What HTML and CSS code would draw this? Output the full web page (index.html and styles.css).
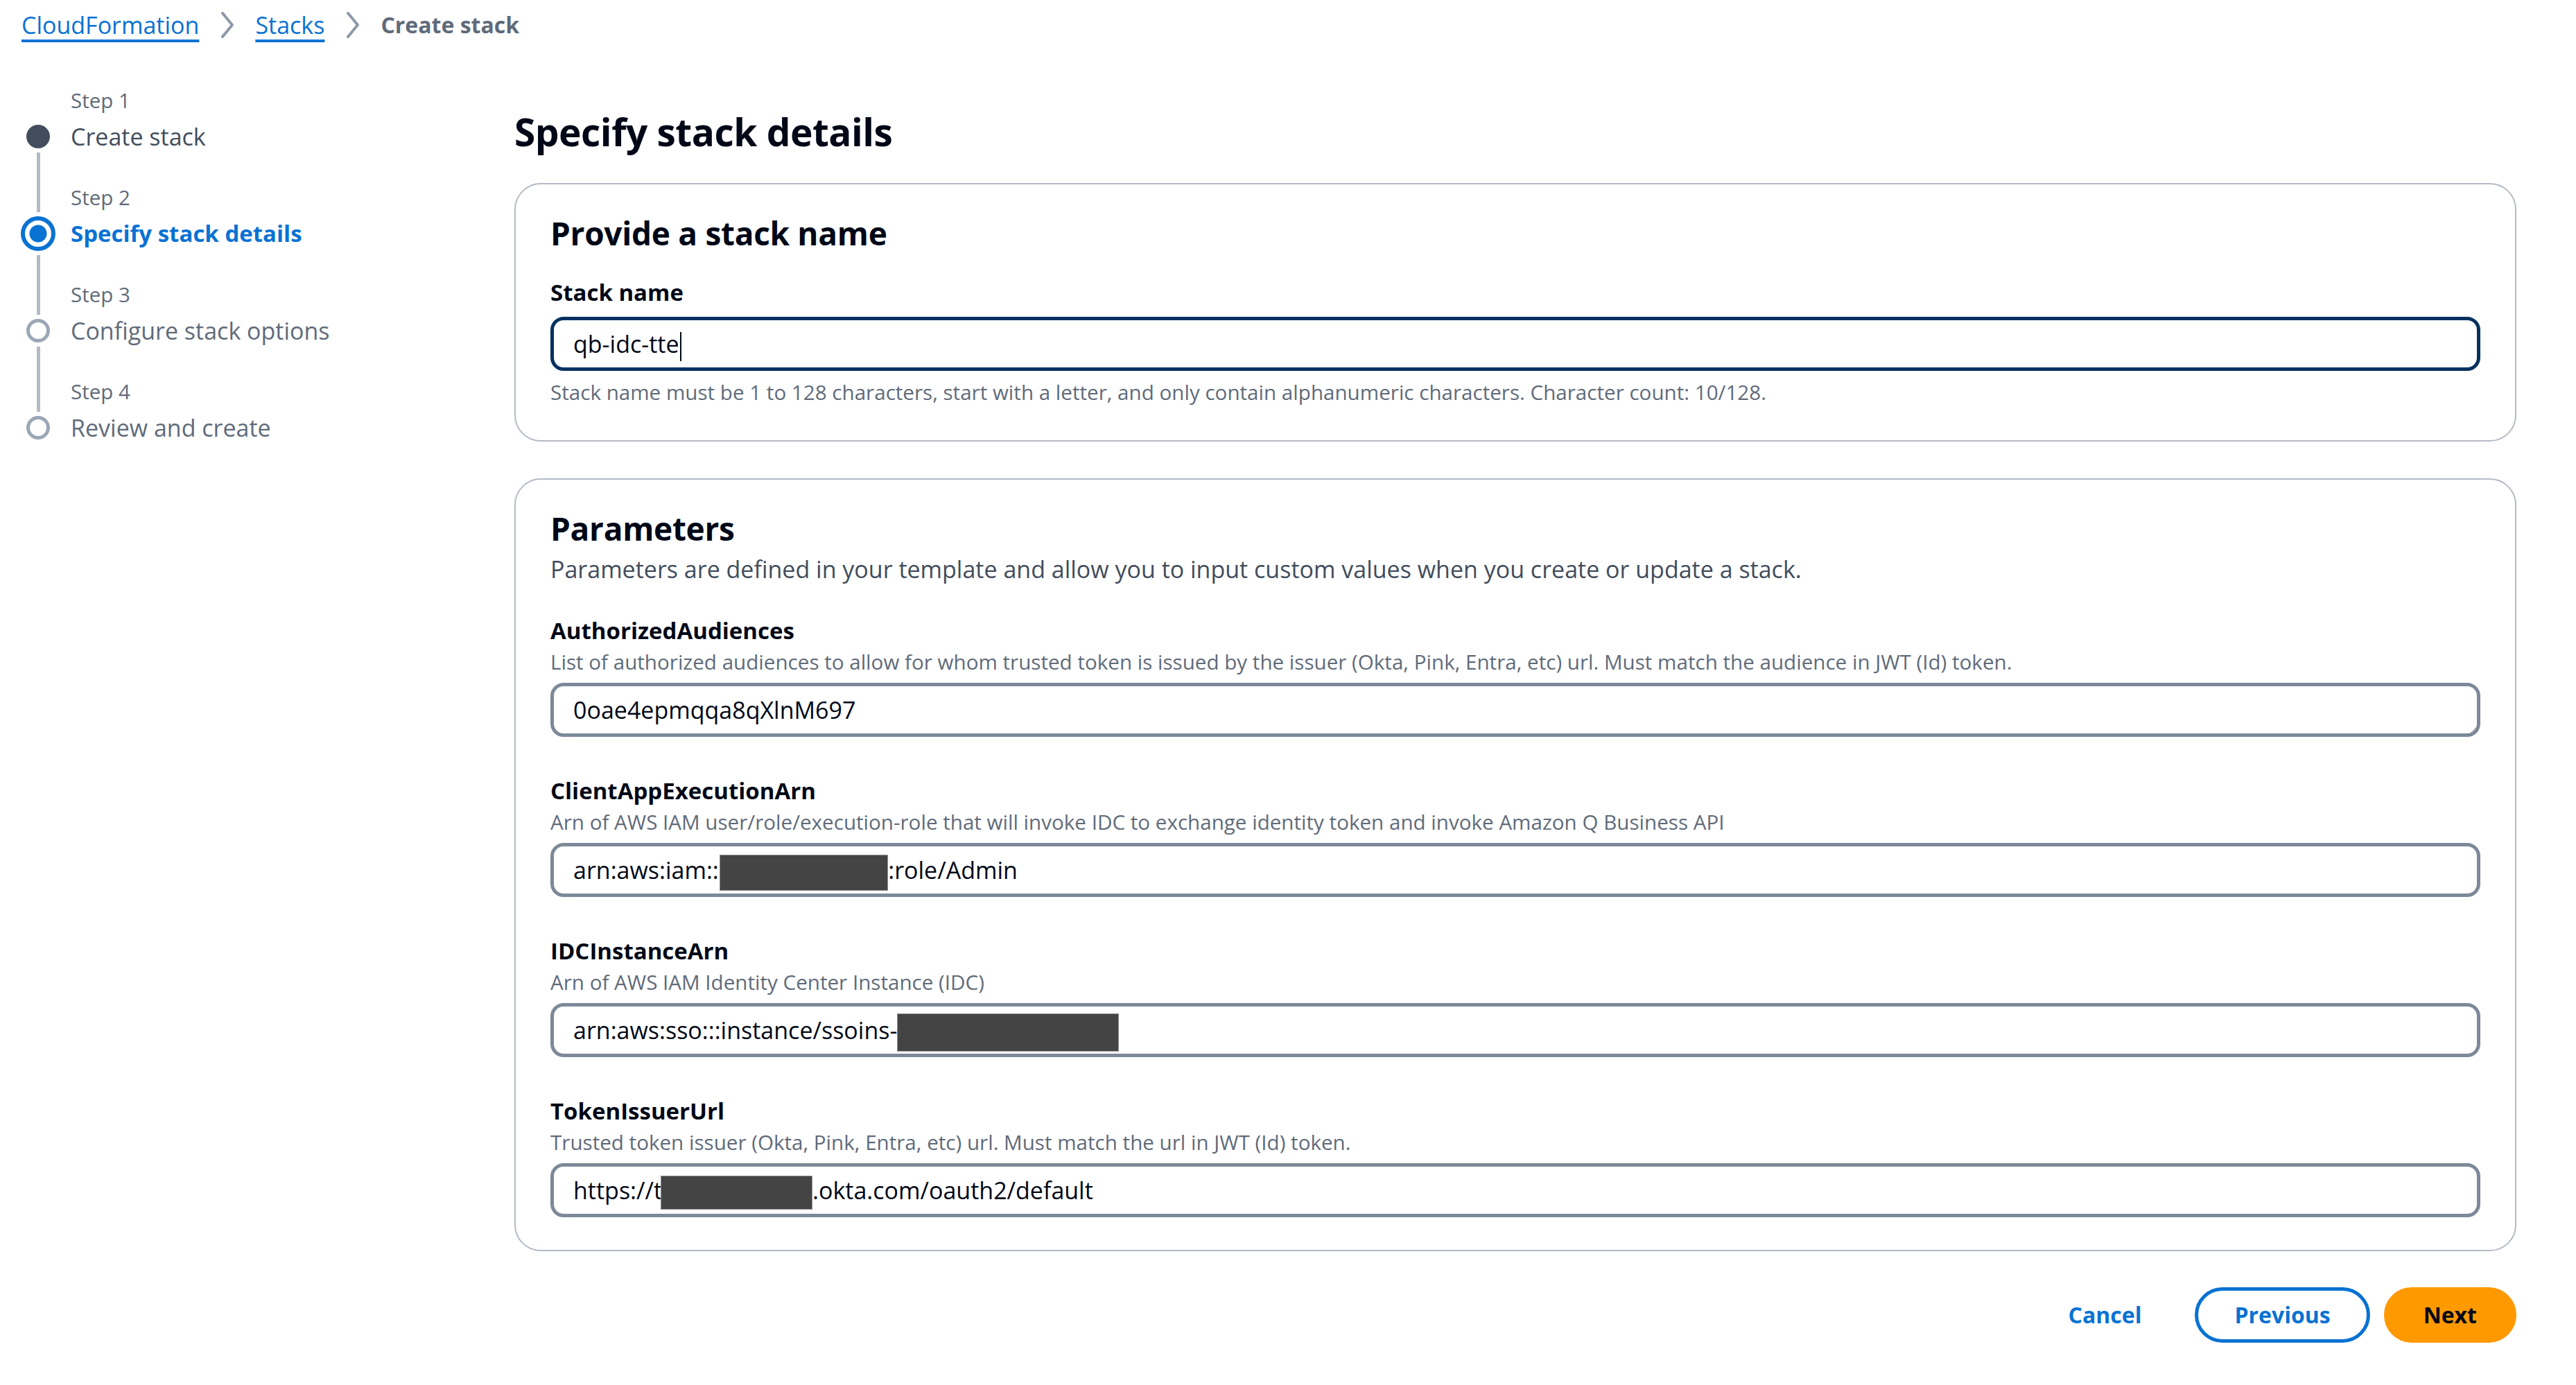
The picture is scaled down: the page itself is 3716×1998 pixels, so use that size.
FILE: index.html
```html
<!DOCTYPE html>
<html lang="en">
<head>
<meta charset="utf-8">
<title>Create stack</title>
<link rel="stylesheet" href="styles.css">
</head>
<body>
<nav class="breadcrumbs">
  <a class="crumb-link" href="#">CloudFormation</a>
  <svg class="crumb-sep" width="24" height="40" viewBox="0 0 24 40" aria-hidden="true"><polyline points="5,3 19,20 5,37" fill="none" stroke="#8d99a8" stroke-width="4" stroke-linejoin="round" stroke-linecap="round"/></svg>
  <a class="crumb-link" href="#">Stacks</a>
  <svg class="crumb-sep" width="24" height="40" viewBox="0 0 24 40" aria-hidden="true"><polyline points="5,3 19,20 5,37" fill="none" stroke="#8d99a8" stroke-width="4" stroke-linejoin="round" stroke-linecap="round"/></svg>
  <span class="crumb-current">Create stack</span>
</nav>

<div class="layout">
  <ol class="steps">
    <li class="step step-first">
      <div class="rail"><span class="seg seg-top"></span><span class="dot dot-done"></span><span class="seg seg-bottom"></span></div>
      <span class="step-num">Step 1</span>
      <span class="step-title title-done">Create stack</span>
    </li>
    <li class="step">
      <div class="rail"><span class="seg seg-top seg-top-active"></span><span class="dot dot-active"></span><span class="seg seg-bottom"></span></div>
      <span class="step-num">Step 2</span>
      <span class="step-title title-active">Specify stack details</span>
    </li>
    <li class="step">
      <div class="rail"><span class="seg seg-top"></span><span class="dot dot-todo"></span><span class="seg seg-bottom"></span></div>
      <span class="step-num">Step 3</span>
      <span class="step-title title-todo">Configure stack options</span>
    </li>
    <li class="step step-last">
      <div class="rail"><span class="seg seg-top"></span><span class="dot dot-todo"></span><span class="seg seg-bottom"></span></div>
      <span class="step-num">Step 4</span>
      <span class="step-title title-todo">Review and create</span>
    </li>
  </ol>

  <main class="main">
    <h1 class="page-title">Specify stack details</h1>

    <section class="card card-name">
      <h2 class="card-title">Provide a stack name</h2>
      <div class="field field-first">
        <label class="field-label">Stack name</label>
        <div class="text-input text-input-focused">qb-idc-tte<span class="caret"></span></div>
        <p class="field-hint">Stack name must be 1 to 128 characters, start with a letter, and only contain alphanumeric characters. Character count: 10/128.</p>
      </div>
    </section>

    <section class="card card-params">
      <h2 class="card-title">Parameters</h2>
      <p class="card-desc">Parameters are defined in your template and allow you to input custom values when you create or update a stack.</p>

      <div class="field field-first">
        <label class="field-label">AuthorizedAudiences</label>
        <p class="field-desc">List of authorized audiences to allow for whom trusted token is issued by the issuer (Okta, Pink, Entra, etc) url. Must match the audience in JWT (Id) token.</p>
        <textarea class="text-area" rows="1">0oae4epmqqa8qXlnM697</textarea>
      </div>

      <div class="field">
        <label class="field-label">ClientAppExecutionArn</label>
        <p class="field-desc">Arn of AWS IAM user/role/execution-role that will invoke IDC to exchange identity token and invoke Amazon Q Business API</p>
        <div class="text-input">arn:aws:iam::7<span class="redact redact-account"></span>:role/Admin</div>
      </div>

      <div class="field">
        <label class="field-label">IDCInstanceArn</label>
        <p class="field-desc">Arn of AWS IAM Identity Center Instance (IDC)</p>
        <div class="text-input">arn:aws:sso:::instance/ssoins-7<span class="redact redact-instance"></span></div>
      </div>

      <div class="field">
        <label class="field-label">TokenIssuerUrl</label>
        <p class="field-desc">Trusted token issuer (Okta, Pink, Entra, etc) url. Must match the url in JWT (Id) token.</p>
        <div class="text-input">https://t<span class="redact redact-domain"></span>.okta.com/oauth2/default</div>
      </div>
    </section>

    <div class="actions">
      <button class="btn btn-link" type="button">Cancel</button>
      <button class="btn btn-normal" type="button">Previous</button>
      <button class="btn btn-primary" type="button">Next</button>
    </div>
  </main>
</div>
</body>
</html>
```

FILE: styles.css
```css
* {
  box-sizing: border-box;
}

html, body {
  margin: 0;
  background: #ffffff;
}

body {
  padding: 12px 86px 0 31px;
  font-family: "Open Sans", "Noto Sans", "Liberation Sans", sans-serif;
  font-size: 34px;
  color: #000716;
}

/* Breadcrumbs */
.breadcrumbs {
  display: flex;
  align-items: center;
  height: 48px;
  line-height: 48px;
}

.crumb-link {
  color: #0972d3;
  text-decoration: underline;
  text-decoration-thickness: 4px;
  text-underline-offset: 8px;
}

.crumb-sep {
  display: block;
  margin: 0 28px 0 29px;
}

.crumb-current {
  color: #5f6b7a;
  font-size: 32px;
  font-weight: 700;
}

/* Layout */
.layout {
  display: grid;
  grid-template-columns: 711px 1fr;
  margin-top: 66px;
}

/* Steps */
.steps {
  list-style: none;
  margin: 0;
  padding: 0;
}

.step {
  display: grid;
  grid-template-columns: 48px 1fr;
  grid-template-rows: 49px 44px 47px;
  column-gap: 23px;
}

.rail {
  grid-column: 1;
  grid-row: 1 / 4;
  display: flex;
  flex-direction: column;
  align-items: center;
}

.seg {
  width: 5px;
  background: #b4bbc6;
}

.seg-top {
  height: 48px;
  flex: none;
}

.seg-top-active {
  height: 40px;
}

.seg-bottom {
  flex: 1;
}

.step-first .seg-top,
.step-last .seg-bottom {
  visibility: hidden;
}

.dot {
  flex: none;
  border-radius: 50%;
  margin: 6px 0;
}

.dot-done {
  width: 34px;
  height: 34px;
  background: #414d5c;
}

.dot-active {
  width: 50px;
  height: 50px;
  border: 6px solid #0972d3;
  background: radial-gradient(circle, #0972d3 0, #0972d3 12px, #ffffff 13px);
}

.dot-todo {
  width: 34px;
  height: 34px;
  border: 5px solid #9ba7b6;
  background: #ffffff;
}

.step-num {
  grid-column: 2;
  grid-row: 1;
  align-self: start;
  font-size: 29.5px;
  line-height: 38px;
  color: #5f6b7a;
}

.step-title {
  grid-column: 2;
  grid-row: 2;
  line-height: 44px;
  white-space: nowrap;
}

.title-done {
  color: #414d5c;
}

.title-active {
  color: #0972d3;
  font-size: 33px;
  font-weight: 700;
}

.title-todo {
  color: #5f6b7a;
}

/* Main */
.main {
  padding-top: 30px;
}

.page-title {
  margin: 0 0 40px;
  font-size: 55px;
  line-height: 68px;
  font-weight: 700;
  letter-spacing: -0.5px;
}

.card {
  border: 2px solid #b4bbc6;
  border-radius: 38px;
  padding: 42px 50px 48px;
}

.card-params {
  margin-top: 53px;
  padding-bottom: 47px;
}

.card-title {
  margin: 0;
  font-size: 46px;
  line-height: 56px;
  font-weight: 700;
  letter-spacing: -0.3px;
}

.card-desc {
  margin: 8px 0 0;
  line-height: 46px;
  color: #414d5c;
}

.field {
  margin-top: 54px;
}

.card-name .field-first {
  margin-top: 34px;
}

.card-params .field-first {
  margin-top: 42px;
}

.field-label {
  display: block;
  font-size: 33px;
  font-weight: 700;
  line-height: 48px;
}

.field-desc {
  margin: 0;
  font-size: 29.6px;
  line-height: 42px;
  color: #5f6b7a;
}

.field-hint {
  margin: 10px 0 0;
  font-size: 29.6px;
  line-height: 42px;
  color: #5f6b7a;
}

.text-input,
.text-area {
  display: block;
  width: 100%;
  height: 78px;
  margin-top: 9px;
  padding: 0 28px;
  border: 5px solid #7d8998;
  border-radius: 19px;
  background: #ffffff;
  font-family: inherit;
  font-size: 34px;
  line-height: 68px;
  color: #000716;
  white-space: nowrap;
  overflow: hidden;
}

.card-name .text-input {
  margin-top: 11px;
}

.text-input-focused {
  border-color: #033160;
}

.text-area {
  resize: vertical;
  outline: none;
}

.caret {
  display: inline-block;
  width: 2px;
  height: 42px;
  margin-left: 1px;
  background: #000716;
  vertical-align: middle;
}

.redact {
  display: inline-block;
  height: 52px;
  background: #444444;
  border: 1px solid #8f8f8f;
  vertical-align: middle;
}

.redact-account {
  width: 243px;
  margin-left: -18px;
}

.redact-instance {
  width: 320px;
  height: 55px;
  margin-left: -20px;
}

.redact-domain {
  width: 219px;
  height: 49px;
  margin-left: -2px;
}

/* Actions */
.actions {
  display: flex;
  justify-content: flex-end;
  gap: 20px;
  margin-top: 52px;
}

.btn {
  height: 80px;
  padding: 0 52px;
  border: 5px solid transparent;
  border-radius: 40px;
  background: transparent;
  font-family: inherit;
  font-size: 32px;
  font-weight: 700;
  line-height: 68px;
  cursor: pointer;
}

.btn-link {
  color: #0972d3;
}

.btn-normal {
  border-color: #0972d3;
  color: #0972d3;
  background: #ffffff;
}

.btn-primary {
  background: #ff9900;
  border-color: #ff9900;
  color: #000716;
}
```
